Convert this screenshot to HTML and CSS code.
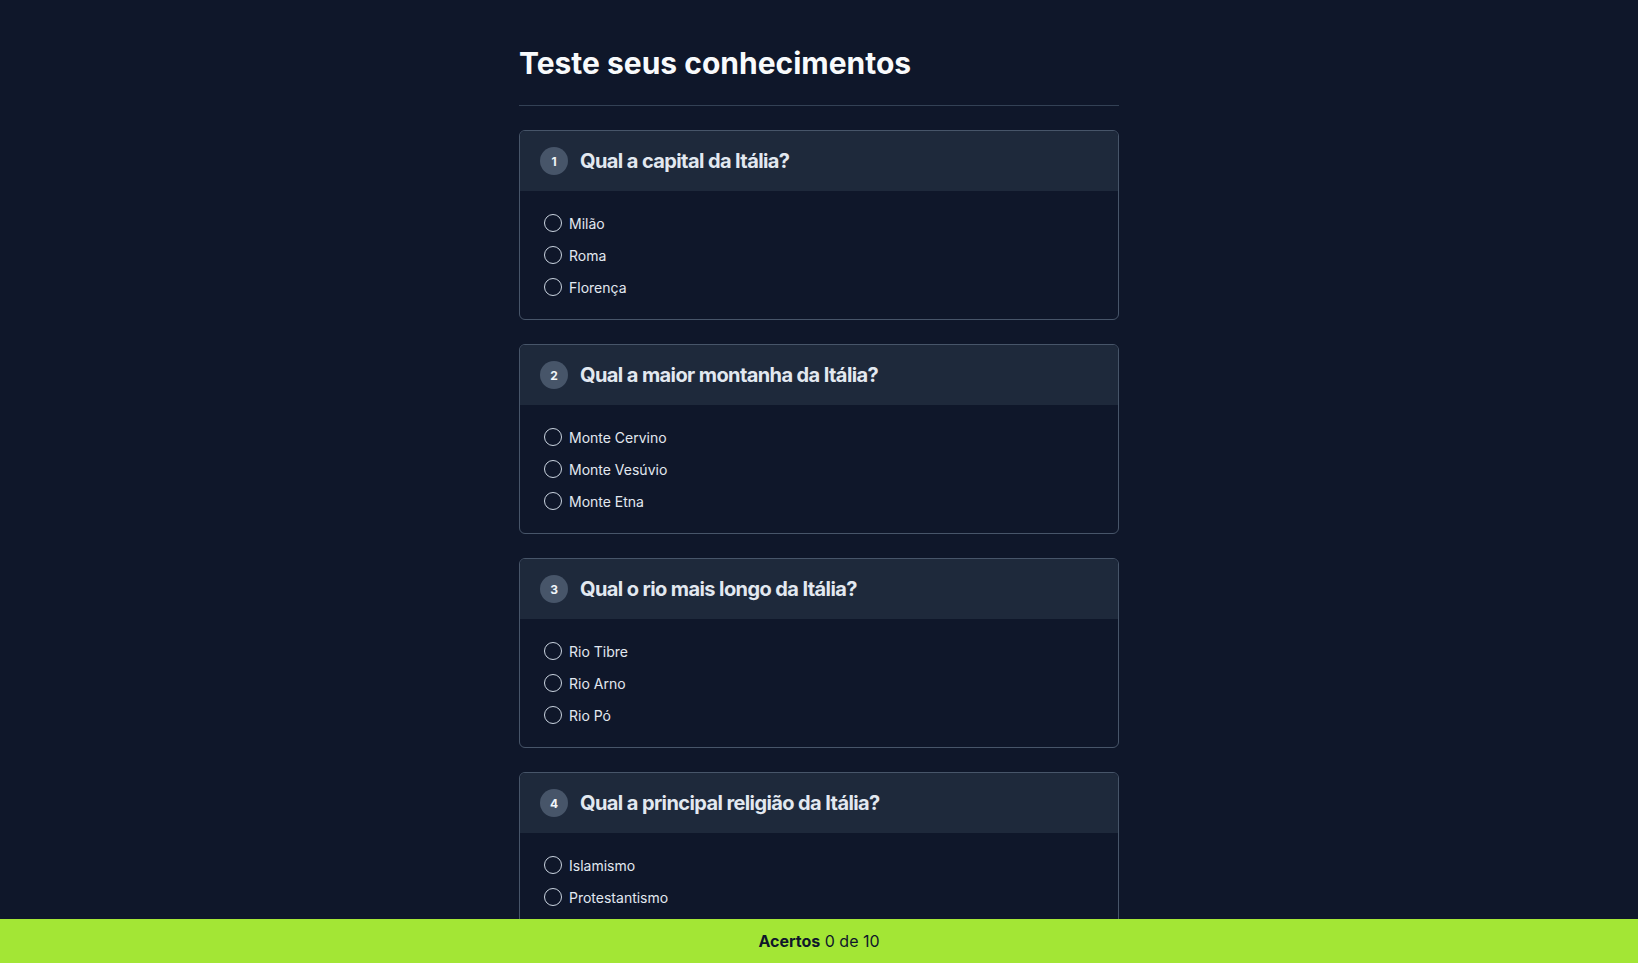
FILE: index.html
```html
<!DOCTYPE html>
<html lang="pt-BR">
<head>
<meta charset="utf-8">
<title>Teste seus conhecimentos</title>
<link rel="stylesheet" href="styles.css">
</head>
<body>
<main class="quiz">
  <h1 class="quiz-title">Teste seus conhecimentos</h1>
  <div class="questions">
    <section class="card">
      <header class="card-header"><span class="badge">1</span><h2 class="question">Qual a capital da Itália?</h2></header>
      <div class="options">
        <label class="option"><input type="radio" name="q1"><span>Milão</span></label>
        <label class="option"><input type="radio" name="q1"><span>Roma</span></label>
        <label class="option"><input type="radio" name="q1"><span>Florença</span></label>
      </div>
    </section>
    <section class="card">
      <header class="card-header"><span class="badge">2</span><h2 class="question">Qual a maior montanha da Itália?</h2></header>
      <div class="options">
        <label class="option"><input type="radio" name="q2"><span>Monte Cervino</span></label>
        <label class="option"><input type="radio" name="q2"><span>Monte Vesúvio</span></label>
        <label class="option"><input type="radio" name="q2"><span>Monte Etna</span></label>
      </div>
    </section>
    <section class="card">
      <header class="card-header"><span class="badge">3</span><h2 class="question">Qual o rio mais longo da Itália?</h2></header>
      <div class="options">
        <label class="option"><input type="radio" name="q3"><span>Rio Tibre</span></label>
        <label class="option"><input type="radio" name="q3"><span>Rio Arno</span></label>
        <label class="option"><input type="radio" name="q3"><span>Rio Pó</span></label>
      </div>
    </section>
    <section class="card">
      <header class="card-header"><span class="badge">4</span><h2 class="question">Qual a principal religião da Itália?</h2></header>
      <div class="options">
        <label class="option"><input type="radio" name="q4"><span>Islamismo</span></label>
        <label class="option"><input type="radio" name="q4"><span>Protestantismo</span></label>
        <label class="option"><input type="radio" name="q4"><span>Catolicismo</span></label>
      </div>
    </section>
  </div>
</main>
<footer class="score"><strong>Acertos</strong>&nbsp;0 de 10</footer>
</body>
</html>
```
FILE: styles.css
```css
* { box-sizing: border-box; }
html, body {
  margin: 0;
  background: #0f172a;
  font-family: Inter, "Noto Sans", sans-serif;
  color: #e2e8f0;
}
.quiz {
  max-width: 600px;
  margin: 0 auto;
  padding: 45px 0 80px;
}
.quiz-title {
  margin: 0 0 24px;
  padding-bottom: 24px;
  border-bottom: 1px solid #334155;
  font-size: 30px;
  line-height: 36px;
  font-weight: 700;
  color: #f8fafc;
}
.questions {
  display: flex;
  flex-direction: column;
  gap: 24px;
}
.card {
  border: 1px solid #475569;
  border-radius: 6px;
  overflow: hidden;
}
.card-header {
  display: flex;
  align-items: center;
  gap: 12px;
  padding: 16px 20px;
  background: #1e293b;
}
.badge {
  width: 28px;
  height: 28px;
  border-radius: 50%;
  background: #475569;
  color: #f1f5f9;
  font-size: 12px;
  font-weight: 700;
  display: flex;
  align-items: center;
  justify-content: center;
}
.question {
  margin: 0;
  font-size: 20px;
  line-height: 28px;
  font-weight: 700;
  letter-spacing: -0.6px;
  color: #e2e8f0;
}
.options {
  display: flex;
  flex-direction: column;
  gap: 8px;
  padding: 20px 24px;
}
.option {
  display: flex;
  align-items: center;
  gap: 7px;
  height: 24px;
  font-size: 14px;
  color: #e2e8f0;
}
.option input {
  appearance: none;
  -webkit-appearance: none;
  margin: 0;
  width: 18px;
  height: 18px;
  border: 1.5px solid #cbd5e1;
  border-radius: 50%;
  background: transparent;
}
.score {
  position: fixed;
  left: 0;
  right: 0;
  bottom: 0;
  height: 44px;
  background: #a3e635;
  color: #0f172a;
  display: flex;
  align-items: center;
  justify-content: center;
  font-size: 16px;
}
.score strong { font-weight: 700; }
```
